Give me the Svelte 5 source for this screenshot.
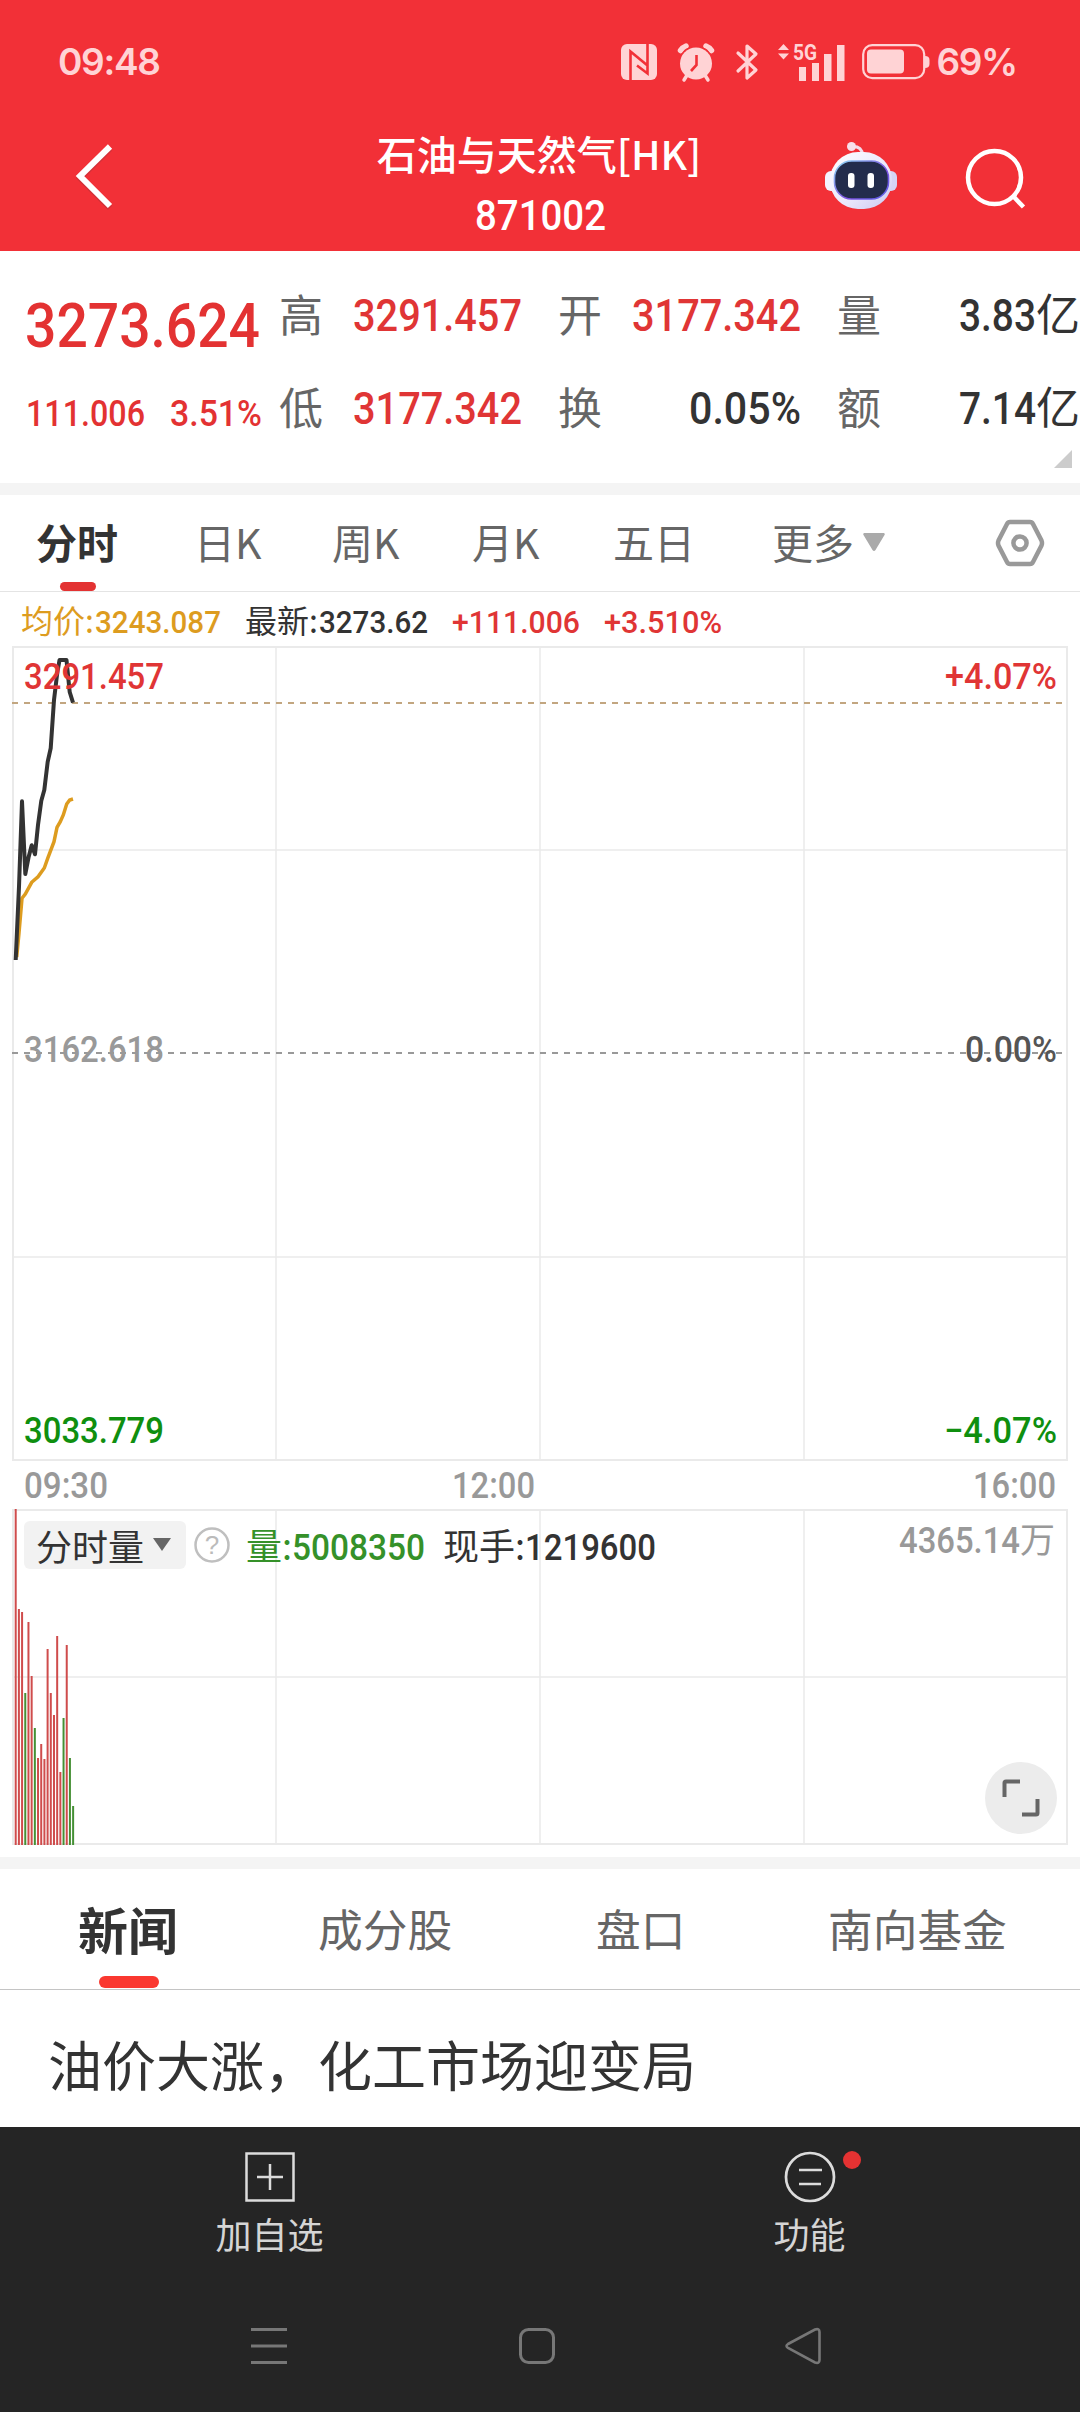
<script>
    const up = '#e03535';
    const down = '#0f8f0f';

    let stats = [
        { label: '高', value: '3291.457', width: 169, red: true },
        { label: '开', value: '3177.342', width: 169, red: true },
        { label: '量', value: '3.83', width: 77, unit: '亿' },
        { label: '低', value: '3177.342', width: 169, red: true },
        { label: '换', value: '0.05%', width: 112 },
        { label: '额', value: '7.14', width: 77, unit: '亿' }
    ];

    let periods = ['分时', '日K', '周K', '月K', '五日', '更多'];
    let activePeriod = '分时';

    let sections = ['新闻', '成分股', '盘口', '南向基金'];
    let activeSection = '新闻';

    // minute lines, in chart pixels
    const priceLine = '15.7,314 19,240.7 22,155.3 25.3,228 28.7,210.7 31.7,199.3 35,208.3 38,179 41.3,154.7 44.3,144 47.7,115.7 50.7,102.3 54,54 57,29 59.5,14 66.5,14 69.7,46 73,56.7';
    const avgLine = '16.7,311 19,287 22,252.3 25.3,248 31.7,236.3 38,230.7 44.3,222 47.7,212.3 54,195.7 57,181.3 60.3,175.7 63.3,169 66.7,158 69.7,154 73,153';

    // [top offset, is rising]
    const volumes = [
        [0, 1], [100, 1], [103, 1], [184, 0], [113, 1], [167, 1], [219, 0], [249, 1], [235, 1], [250, 1],
        [140, 1], [184, 1], [206, 1], [127, 1], [263, 1], [209, 0], [136, 1], [249, 0], [297, 0]
    ];
</script>

<!-- condensed figures, the box is as high as a digit so it sits on the baseline -->
{#snippet num(text, width, size)}
    {@const height = Math.round(size * 0.711)}
    <svg class="num" {width} {height}>
        <text x="0" y={height} font-size={size} textLength={width} lengthAdjust="spacingAndGlyphs">{text}</text>
    </svg>
{/snippet}

<div class="app">
    <header>
        <div class="statusbar">
            <span class="clock">09:48</span>
            <div class="status_icons">
                <svg class="nfc" width="36" height="36" viewBox="0 0 36 36">
                    <rect width="36" height="36" rx="6" fill="#ffd3d5" />
                    <path d="M9.500 36V7.500L26.500 21.500M26.500 0V29.500L16 21.500" fill="none" stroke="#f23037" stroke-width="2.600" />
                </svg>
                <svg class="alarm" width="38" height="40" viewBox="0 0 38 40">
                    <path d="M3.500 8.500A11 11 0 0 1 9 4M29 4A11 11 0 0 1 34.500 8.500" fill="none" stroke="#ffd3d5" stroke-width="5.500" stroke-linecap="round" />
                    <circle cx="19" cy="21.500" r="17.500" fill="#f23037" />
                    <circle cx="19" cy="21.500" r="16" fill="#ffd3d5" />
                    <path d="M9.500 34L7 38M28.500 34L31 38" stroke="#ffd3d5" stroke-width="3.500" stroke-linecap="round" />
                    <path d="M19.500 13V23L14 29" fill="none" stroke="#f23037" stroke-width="2.600" />
                </svg>
                <svg class="bt" width="22" height="38" viewBox="0 0 22 38">
                    <path d="M2 10L20 27L11 35V3L20 11L2 28" fill="none" stroke="#ffd3d5" stroke-width="3.200" stroke-linejoin="round" stroke-linecap="round" />
                </svg>
                <svg class="signal" width="68" height="38" viewBox="0 0 68 38" fill="#ffd3d5">
                    <path d="M0 7L5.500 1L11 7ZM0 10.500H11L5.500 16.500Z" />
                    <rect x="21" y="24" width="7" height="14" />
                    <rect x="34" y="20" width="7" height="18" />
                    <rect x="46" y="11" width="7.500" height="27" />
                    <rect x="59" y="2" width="7.500" height="36" />
                    <text x="15" y="17" textLength="24" lengthAdjust="spacingAndGlyphs">5G</text>
                </svg>
                <svg class="battery" width="68" height="36" viewBox="0 0 68 36">
                    <rect x="1.200" y="1.200" width="61" height="33" rx="9" fill="none" stroke="#ffd3d5" stroke-width="2.200" />
                    <rect x="5" y="5.500" width="37" height="24" rx="4" fill="#ffd3d5" />
                    <path d="M63 12Q67.500 12 67.500 16V20Q67.500 24 63 24Z" fill="#ffd3d5" />
                </svg>
                <span class="percent">69%</span>
            </div>
        </div>

        <div class="navbar">
            <svg class="back" width="48" height="76" viewBox="0 0 48 76">
                <path d="M36 8.500L6 38L36 68" fill="none" stroke="#a8323a" stroke-opacity=".4" stroke-width="6" transform="translate(0 2)" />
                <path d="M36 8.500L6 38L36 68" fill="none" stroke="#fff" stroke-width="6" />
            </svg>
            <div class="heading">
                <div class="name">石油与天然气[HK]</div>
                <div class="code">{@render num('871002', 131, 42)}</div>
            </div>
            <svg class="robot" width="74" height="70" viewBox="0 0 74 70">
                <defs>
                    <linearGradient id="shell" x1="0" y1="0" x2="1" y2="1">
                        <stop offset="0" stop-color="#fff" />
                        <stop offset=".6" stop-color="#e9e6fb" />
                        <stop offset="1" stop-color="#c9c8f0" />
                    </linearGradient>
                    <linearGradient id="rim" x1="0" y1="0" x2="1" y2="1">
                        <stop offset="0" stop-color="#8fdcf5" />
                        <stop offset=".6" stop-color="#7c4fe0" />
                        <stop offset="1" stop-color="#5b63e8" />
                    </linearGradient>
                </defs>
                <path d="M28 5.500Q38 5 38.500 14" fill="none" stroke="#f3dcea" stroke-width="3" />
                <circle cx="27.500" cy="5.500" r="4.500" fill="#f8dfea" />
                <rect x="1" y="30" width="14" height="20" rx="6" fill="#f4f2ff" />
                <rect x="59" y="30" width="14" height="20" rx="6" fill="#d5d4f5" />
                <rect x="6" y="11" width="62" height="57" rx="28" fill="url(#shell)" />
                <rect x="10.500" y="20" width="54" height="38" rx="17" fill="#232c4c" stroke="url(#rim)" stroke-width="1.600" />
                <rect x="24" y="32" width="6.500" height="15" rx="3" fill="#fff" />
                <rect x="43.500" y="32" width="6.500" height="15" rx="3" fill="#fff" />
            </svg>
            <svg class="search" width="62" height="64" viewBox="0 0 62 64">
                <circle cx="29.500" cy="29.500" r="26.500" fill="none" stroke="#fff" stroke-width="4.500" />
                <path d="M48 48L58.500 59" stroke="#fff" stroke-width="4.500" />
            </svg>
        </div>
    </header>

    <section class="quote">
        <div class="price">
            {@render num('3273.624', 235, 62)}
            <div class="change">
                {@render num('111.006', 119, 37)}
                {@render num('3.51%', 92, 37)}
            </div>
        </div>
        <div class="stats">
            {#each stats as s}
                <div class="stat">
                    <span class="label">{s.label}</span>
                    <span class="value" class:red={s.red}>{@render num(s.value, s.width, 44)}{#if s.unit}{s.unit}{/if}</span>
                </div>
            {/each}
        </div>
        <i class="corner"></i>
    </section>

    <nav class="periods">
        {#each periods as p}
            <div class="period" class:active={p === activePeriod}>
                {p}
                {#if p === '更多'}
                    <svg width="22" height="18" viewBox="0 0 22 18"><path d="M1 0H21Q22.500 1 21.500 2L12.500 17Q11 19 9.500 17L.5 2Q-.5 1 1 0Z" fill="#aaa" /></svg>
                {/if}
            </div>
        {/each}
        <svg class="settings" width="50" height="48" viewBox="0 0 50 48" fill="none" stroke="#999" stroke-width="4.500">
            <path d="M15 3H35Q37 3 38 5L46.500 21.500Q47.500 24 46.500 26.500L38 43Q37 45 35 45H15Q13 45 12 43L3.500 26.500Q2.500 24 3.500 21.500L12 5Q13 3 15 3Z" />
            <circle cx="25" cy="24" r="6.600" />
        </svg>
    </nav>

    <div class="info">
        <span class="avg">均价:{@render num('3243.087', 126, 32)}</span>
        <span class="now">最新:{@render num('3273.62', 109, 32)}</span>
        <span class="red">{@render num('+111.006', 128, 32)}</span>
        <span class="red">{@render num('+3.510%', 118, 32)}</span>
    </div>

    <svg class="chart" width="1080" height="863" viewBox="0 0 1080 863">
        <g stroke="#eaeaea" stroke-width="2" fill="none">
            <rect x="13" y="1" width="1054" height="813" />
            <path d="M276 1V814M540 1V814M804 1V814" stroke-width="1.500" />
            <path d="M13 204H1067M13 611H1067" stroke-width="1.500" />
        </g>
        <path d="M12 57H1063" stroke="#c2a680" stroke-width="2" stroke-dasharray="6 6" />
        <path d="M12 407H1063" stroke="#999" stroke-width="2" stroke-dasharray="6 6" />
        <polyline points={avgLine} fill="none" stroke="#dd9c1f" stroke-width="3.500" />
        <polyline points={priceLine} fill="none" stroke="#333" stroke-width="4" stroke-linejoin="round" />

        <g class="axis" fill={up}>
            <text x="24" y="43" textLength="140" lengthAdjust="spacingAndGlyphs">3291.457</text>
            <text x="945" y="43" textLength="112" lengthAdjust="spacingAndGlyphs">+4.07%</text>
        </g>
        <text class="axis" x="24" y="416" fill="#999" textLength="140" lengthAdjust="spacingAndGlyphs">3162.618</text>
        <text class="axis" x="965" y="416" fill="#555" textLength="92" lengthAdjust="spacingAndGlyphs">0.00%</text>
        <g class="axis" fill={down}>
            <text x="24" y="797" textLength="140" lengthAdjust="spacingAndGlyphs">3033.779</text>
            <text x="944" y="797" textLength="113" lengthAdjust="spacingAndGlyphs">−4.07%</text>
        </g>
        <g class="axis" fill="#999">
            <text x="24" y="852" textLength="84" lengthAdjust="spacingAndGlyphs">09:30</text>
            <text x="452" y="852" textLength="83" lengthAdjust="spacingAndGlyphs">12:00</text>
            <text x="973" y="852" textLength="83" lengthAdjust="spacingAndGlyphs">16:00</text>
        </g>
    </svg>

    <div class="volume">
        <svg class="grid" width="1080" height="348" viewBox="0 0 1080 348">
            <g stroke="#eaeaea" stroke-width="2" fill="none">
                <rect x="13" y="1" width="1054" height="334" />
                <path d="M276 1V335M540 1V335M804 1V335M13 168H1067" stroke-width="1.500" />
            </g>
            {#each volumes as [top, rising], i}
                <rect x={14.7 + i * 3.19} y={top} width="2" height={336 - top} fill={rising ? '#cf4c4c' : '#459035'} />
            {/each}
        </svg>
        <div class="volume_head">
            <span class="picker">分时量<svg width="20" height="13" viewBox="0 0 20 13"><path d="M1 0H19L10 13Z" fill="#666" /></svg></span>
            <svg class="help" width="38" height="38" viewBox="0 0 38 38">
                <circle cx="19" cy="19" r="16.500" fill="none" stroke="#bfbfbf" stroke-width="2.500" />
                <text x="19" y="28" text-anchor="middle" fill="#bbb">?</text>
            </svg>
            <span class="vol">量:{@render num('5008350', 133, 36)}</span>
            <span class="hand">现手:{@render num('1219600', 131, 36)}</span>
            <span class="max">{@render num('4365.14', 121, 36)}万</span>
        </div>
        <div class="expand">
            <svg width="38" height="38" viewBox="0 0 38 38" fill="none" stroke="#666" stroke-width="4">
                <path d="M2.500 18V4Q2.500 2.500 4 2.500H18M35.500 20V34Q35.500 35.500 34 35.500H20" />
            </svg>
        </div>
    </div>

    <nav class="sections">
        {#each sections as s}
            <div class="section" class:active={s === activeSection}>{s}</div>
        {/each}
    </nav>

    <article>油价大涨，化工市场迎变局</article>

    <footer>
        <div class="actions">
            <div class="action">
                <svg width="52" height="52" viewBox="0 0 52 52" fill="none" stroke="#dcdcdc" stroke-width="2.500">
                    <rect x="2.500" y="2.500" width="47" height="47" />
                    <path d="M26 13V39M13 26H39" />
                </svg>
                <span>加自选</span>
            </div>
            <div class="action">
                <svg width="52" height="52" viewBox="0 0 52 52" fill="none" stroke="#dcdcdc" stroke-width="2.700">
                    <circle cx="26" cy="26" r="24" />
                    <path d="M15 19H38M15 33H37" />
                </svg>
                <i class="dot"></i>
                <span>功能</span>
            </div>
        </div>
        <div class="system">
            <svg width="40" height="40" viewBox="0 0 40 40"><path d="M2 3.500H38M2 20H38M2 36.500H38" stroke="#777" stroke-width="3" /></svg>
            <svg width="40" height="40" viewBox="0 0 40 40"><rect x="4.500" y="3.500" width="33" height="33" rx="8" fill="none" stroke="#777" stroke-width="3" /></svg>
            <svg width="40" height="40" viewBox="0 0 40 40"><path d="M5 18L32 3.500Q36.500 2 36.500 6V34Q36.500 38 32 36.500L5 22Q2 20 5 18Z" fill="none" stroke="#777" stroke-width="2.600" /></svg>
        </div>
    </footer>
</div>

<style>
    :global(body) {
        background: #fff;
    }

    .app {
        width: 1080px;
        height: 2412px;
        overflow: hidden;
        display: flex;
        flex-direction: column;
        background: #fff;
        color: #333;
        font-family: 'Noto Sans CJK SC', sans-serif;
        line-height: 1;
    }

    .app > * {
        flex: none;
        box-sizing: border-box;
    }

    svg {
        display: block;
        flex: none;
        overflow: visible;
    }

    .num, .axis {
        font-family: Roboto, 'Liberation Sans', sans-serif;
        font-weight: 500;
    }

    .num {
        display: inline-block;
        vertical-align: baseline;
        fill: currentColor;
    }

    .red {
        color: #e03535;
    }

    /* Header */
    header {
        height: 251px;
        background: #f23037;
    }

    .statusbar {
        height: 123px;
        padding: 0 63px 0 58px;
        display: flex;
        align-items: center;
        justify-content: space-between;
        color: #ffd3d5;
        font: 600 37px Inter, sans-serif;
        letter-spacing: -1.3px;
    }

    .status_icons {
        display: flex;
        align-items: center;
    }

    .alarm { margin-left: 20px; }
    .bt { margin-left: 21px; }
    .signal { margin-left: 20px; font: 700 22px Roboto, sans-serif; letter-spacing: 0; }
    .battery { margin-left: 16px; }
    .percent { margin-left: 6px; }

    .navbar {
        height: 128px;
        display: grid;
        grid-template-columns: 300px 478px 140px 1fr;
        align-items: start;
        color: #fff;
    }

    .back { margin: 15px 0 0 74px; }
    .robot { margin: 18px 0 0 46px; }
    .search { margin: 25px 0 0 47px; }

    .heading {
        text-align: center;
    }

    .name {
        margin-top: 10px;
        font-size: 40px;
        font-weight: 500;
    }

    .code {
        display: flex;
        justify-content: center;
        margin: 27px 0 0 2px;
    }

    /* Quote */
    .quote {
        position: relative;
        height: 232px;
        padding: 39px 0 0 25px;
        display: flex;
    }

    .price {
        width: 254px;
        padding-top: 13px;
        display: flex;
        flex-direction: column;
        gap: 53px;
        color: #e33232;
    }

    .change {
        width: 237px;
        padding-left: 1px;
        box-sizing: border-box;
        display: flex;
        justify-content: space-between;
    }

    .stats {
        display: grid;
        grid-template-columns: 243px 243px 243px;
        column-gap: 36px;
        grid-auto-rows: 44px;
        row-gap: 49px;
        font-size: 44px;
    }

    .stat {
        display: flex;
        justify-content: space-between;
    }

    .label {
        padding-top: 1px;
        color: #666;
    }

    .corner {
        position: absolute;
        right: 8px;
        bottom: 15px;
        border-left: 18px solid transparent;
        border-bottom: 18px solid #ccc;
    }

    /* Periods */
    .periods {
        height: 109px;
        padding: 0 0 3px 36px;
        border-top: 12px solid #f4f4f4;
        border-bottom: 1px solid #e4e4e4;
        display: grid;
        grid-template-columns: 158px 138px 140px 141px 159px 223px 50px;
        align-items: center;
        font-size: 41px;
        color: #666;
    }

    .period {
        display: flex;
        align-items: center;
        gap: 9px;
    }

    .period.active {
        position: relative;
        color: #333;
        font-weight: 700;
    }

    .period.active::after {
        content: '';
        position: absolute;
        left: 24px;
        top: 61px;
        width: 36px;
        height: 9px;
        border-radius: 5px;
        background: #e33232;
    }

    .settings {
        margin-top: 3px;
    }

    /* Info line */
    .info {
        height: 54px;
        padding: 0 0 1px 21px;
        display: flex;
        align-items: center;
        gap: 24px;
        font-size: 32px;
    }

    .avg .num, .now .num {
        margin-left: 1px;
    }

    .avg {
        color: #dd9c1f;
    }

    .axis, .axis text {
        font-size: 36px;
    }

    /* Volume */
    .volume {
        position: relative;
        height: 348px;
    }

    .grid {
        position: absolute;
    }

    .volume_head {
        position: relative;
        padding: 12px 25px 0 24px;
        display: flex;
        align-items: center;
        font-size: 36px;
    }

    .picker {
        width: 162px;
        height: 48px;
        box-sizing: border-box;
        padding: 0 0 1px 12px;
        display: flex;
        align-items: center;
        gap: 8px;
        border-radius: 6px;
        background: #f2f2f2;
    }

    .help {
        margin: 0 15px 0 7px;
        font: 26px 'Liberation Sans', sans-serif;
    }

    .vol, .hand {
        margin-top: -3px;
    }

    .vol {
        color: #359129;
        margin-right: 18px;
    }

    .max {
        margin: -15px 0 0 auto;
        color: #999;
        font-size: 35px;
    }

    .expand {
        position: absolute;
        right: 23px;
        top: 253px;
        width: 72px;
        height: 72px;
        display: flex;
        align-items: center;
        justify-content: center;
        border-radius: 50%;
        background: #ececec;
    }

    /* News */
    .sections {
        height: 133px;
        padding: 0 0 2px 78px;
        border-top: 12px solid #f4f4f4;
        border-bottom: 1px solid #c4c4c4;
        display: grid;
        grid-template-columns: 240px 278px 232px auto;
        align-items: center;
        font-size: 44.7px;
        color: #666;
    }

    .section.active {
        position: relative;
        color: #333;
        font-size: 50px;
        font-weight: 700;
    }

    .section.active::after {
        content: '';
        position: absolute;
        left: 21px;
        top: 73px;
        width: 60px;
        height: 12px;
        border-radius: 6px;
        background: #fa3830;
    }

    article {
        height: 137px;
        padding: 47px 48px;
        font-size: 54px;
    }

    /* Footer */
    footer {
        height: 285px;
        background: #252525;
        color: #d5d5d5;
    }

    .actions {
        height: 180px;
        padding-top: 24px;
        box-sizing: border-box;
        display: grid;
        grid-template-columns: 539px 541px;
    }

    .action {
        position: relative;
        display: flex;
        flex-direction: column;
        align-items: center;
        gap: 12px;
        font-size: 36px;
    }

    .dot {
        position: absolute;
        left: 304px;
        top: 0;
        width: 18px;
        height: 18px;
        border-radius: 50%;
        background: #e53232;
    }

    .system {
        padding: 19px 257px 0 249px;
        display: flex;
        justify-content: space-between;
    }
</style>
